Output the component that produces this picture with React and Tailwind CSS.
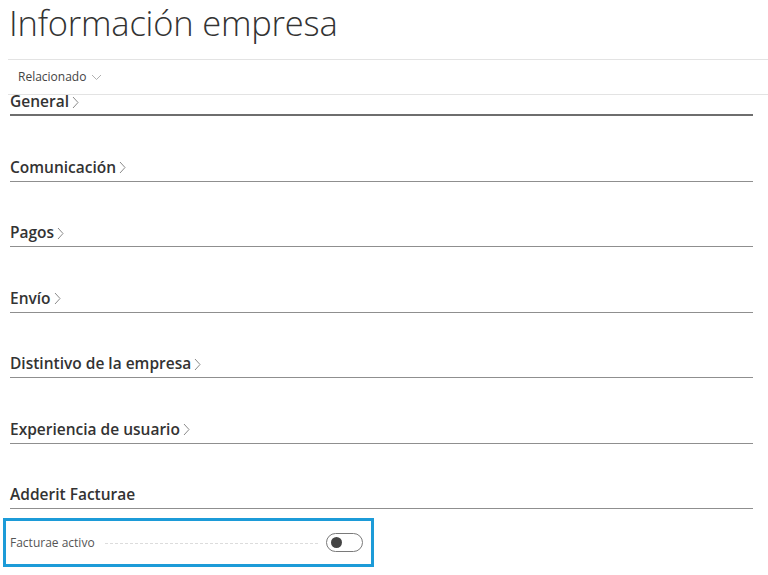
import React from 'react';

const font = { fontFamily: '"Open Sans", "Noto Sans", sans-serif' };

function Chevron() {
  return (
    <svg className="ml-[3px] h-[13px] w-[7px]" viewBox="0 0 7 13" fill="none" stroke="#8a8a8a" strokeWidth="1">
      <polyline points="1,1 6,6.5 1,12" />
    </svg>
  );
}

function Section({ title, chevron = true }) {
  return (
    <div className="mt-[41.5px] w-[743px] border-b-[1.5px] border-[#8f8f8f] pb-[3px]">
      <div className="flex h-[20px] items-center text-[15.5px] font-semibold text-[#333]">
        <span>{title}</span>
        {chevron && <Chevron />}
      </div>
    </div>
  );
}

const sections = [
  'Comunicación',
  'Pagos',
  'Envío',
  'Distintivo de la empresa',
  'Experiencia de usuario',
];

export default function App() {
  return (
    <div className="h-[575px] w-[768px] overflow-hidden bg-white" style={font}>
      <h1 className="ml-[9px] h-[59px] pt-[1px] text-[34.5px] font-light leading-[44px] tracking-[-0.2px] text-[#333]">
        Información empresa
      </h1>
      <div className="ml-[8px] border-t border-[#e3e3e3]" />
      <div className="ml-[8px] flex h-[35px] items-center border-b border-[#e3e3e3] pl-[10px] text-[12px] text-[#444]">
        Relacionado
        <svg className="ml-[5px] mt-[1px] h-[7px] w-[11px]" viewBox="0 0 11 7" fill="none" stroke="#b0b0b0" strokeWidth="1">
          <polyline points="1,1 5.5,5.5 10,1" />
        </svg>
      </div>
      <div className="ml-[10px]">
        <div className="w-[743px] border-b-2 border-[#6e6e6e] pb-[5px]">
          <div className="flex h-[14px] items-center text-[15.5px] font-semibold text-[#333]">
            <span>General</span>
            <Chevron />
          </div>
        </div>
        {sections.map((s) => (
          <Section key={s} title={s} />
        ))}
        <Section title="Adderit Facturae" chevron={false} />
      </div>
      <div className="ml-[3px] mt-[9px] flex h-[49px] w-[371px] items-center border-[3px] border-[#1c9bd8] pl-[4px] pr-[8px]">
        <span className="text-[12px] text-[#555]">Facturae activo</span>
        <div className="ml-[10px] mr-[8px] mt-[2px] flex-1 border-b border-dashed border-[#dcdcdc]" />
        <div className="flex h-[19px] w-[37px] items-center rounded-full border-[1.5px] border-[#7a7a7a] pl-[4px]">
          <div className="h-[11px] w-[11px] rounded-full bg-[#444]" />
        </div>
      </div>
    </div>
  );
}
